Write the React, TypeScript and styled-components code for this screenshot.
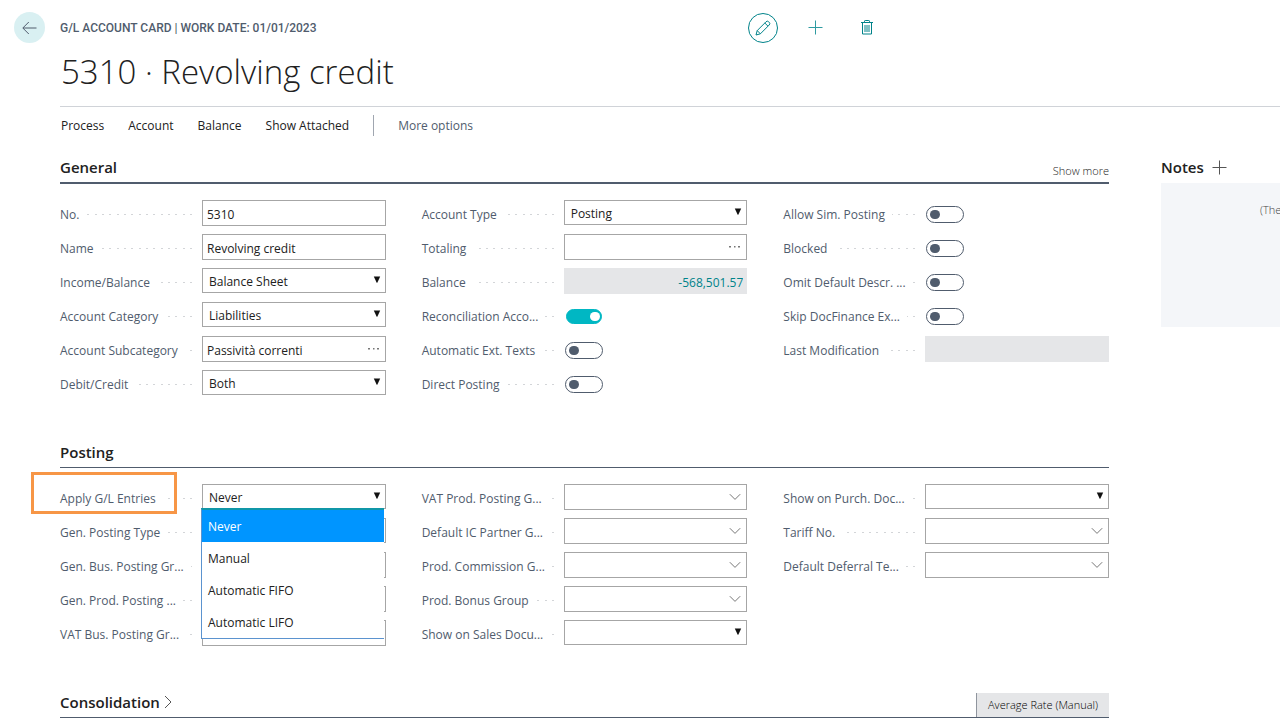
import React, { useId } from 'react';
import styled, { createGlobalStyle } from 'styled-components';

const ink = '#212121';
const slate = '#505c6d';
const teal = '#00838a';
const line = '#a6a6a6';

const GlobalStyle = createGlobalStyle`
  *, *::before, *::after { box-sizing: border-box; }
  body {
    margin: 0;
    background: #fff;
    color: ${ink};
    font-family: 'Open Sans', 'Noto Sans', sans-serif;
    font-size: 12px;
    line-height: 20px;
    overflow-x: hidden;
  }
  button, input, select { font: inherit; color: inherit; }
  button { border: 0; padding: 0; background: none; cursor: pointer; }
`;

const Page = styled.div`
  padding: 0 0 0 60px;
`;

const TopBar = styled.header`
  display: grid;
  grid-template-columns: 31px 1fr 532px;
  align-items: center;
  column-gap: 15px;
  margin-left: -46px;
  padding-top: 12px;
`;

const BackButton = styled.button`
  display: grid;
  place-items: center;
  width: 31px;
  height: 31px;
  border-radius: 50%;
  background: #d9f0f2;
`;

const Crumb = styled.div`
  font-family: Roboto, sans-serif;
  font-size: 12px;
  font-weight: 500;
  color: ${slate};
  white-space: nowrap;
`;

const Actions = styled.div`
  display: flex;
  align-items: center;
  gap: 22px;
`;

const IconButton = styled.button<{ $ring?: boolean }>`
  display: grid;
  place-items: center;
  width: 30px;
  height: 30px;
  border-radius: 50%;
  border: ${(p) => (p.$ring ? `1px solid ${teal}` : '0')};
`;

const Title = styled.h1`
  margin: 0;
  padding: 4px 0 0 1px;
  font-size: 33px;
  line-height: 50px;
  font-weight: 300;
  white-space: nowrap;
`;

const Menu = styled.nav`
  display: flex;
  align-items: center;
  gap: 24px;
  margin-top: 9px;
  padding: 8px 0 0 1px;
  border-top: 1px solid #d0d3d8;
`;

const MenuItem = styled.button<{ $muted?: boolean }>`
  color: ${(p) => (p.$muted ? slate : ink)};
  white-space: nowrap;
`;

const Divider = styled.span`
  width: 1px;
  height: 21px;
  background: #a0a6b0;
`;

const Body = styled.div`
  display: grid;
  grid-template-columns: minmax(0, 1fr) 119px;
  column-gap: 52px;
  padding-top: 21px;
`;

const Group = styled.section`
  & + & { margin-top: 44px; }
`;

const GroupHead = styled.div<{ $strong?: boolean }>`
  display: flex;
  align-items: flex-end;
  justify-content: space-between;
  height: ${(p) => (p.$strong ? 27 : 28)}px;
  border-bottom: ${(p) => (p.$strong ? 2 : 1)}px solid ${slate};
`;

const GroupTitle = styled.h2`
  display: flex;
  align-items: center;
  gap: 4px;
  margin: 0;
  padding-bottom: 3px;
  font-size: 15px;
  line-height: 24px;
  font-weight: 600;
`;

const ShowMore = styled.button`
  padding-bottom: 1px;
  font-size: 11px;
  font-weight: 300;
`;

const RateTag = styled.button`
  height: 24px;
  padding: 0 11px;
  border-left: 1px solid #8f959e;
  background: #e5e6e8;
  font-size: 11px;
  font-weight: 300;
  color: #000;
`;

const Columns = styled.div`
  display: grid;
  grid-template-columns: repeat(3, minmax(0, 1fr));
  column-gap: 36px;
  padding-top: 16px;
`;

const Column = styled.div`
  display: flex;
  flex-direction: column;
  gap: 8px;
`;

const Row = styled.div`
  position: relative;
  display: grid;
  grid-template-columns: 132px minmax(0, 1fr);
  column-gap: 10px;
  height: 26px;
`;

const LabelCell = styled.div`
  display: flex;
  align-items: center;
  gap: 7px;
  padding-top: 3px;
  color: ${slate};
  white-space: nowrap;
`;

const Leader = styled.span`
  flex: 1;
  height: 1px;
  background: repeating-linear-gradient(to left,
    #d3d5d8 0 2px, transparent 2px 7px,
    #d3d5d8 7px 9px, transparent 9px 15px,
    #d3d5d8 15px 17px, transparent 17px 22px);
`;

const Field = styled.div<{ $h?: number }>`
  position: relative;
  display: flex;
  height: ${(p) => p.$h ?? 26}px;
`;

const TextBox = styled.input<{ $filled?: boolean }>`
  width: 100%;
  min-width: 0;
  padding: 4px ${(p) => (p.$filled ? 3 : 4)}px 0;
  border: 1px solid ${(p) => (p.$filled ? '#e5e6e8' : line)};
  border-radius: 0;
  background: ${(p) => (p.$filled ? '#e5e6e8' : '#fff')};
  color: ${(p) => (p.$filled ? teal : ink)};
  text-align: ${(p) => (p.$filled ? 'right' : 'left')};
  outline: none;
`;

const Select = styled.select`
  appearance: none;
  width: 100%;
  min-width: 0;
  padding: 2px 6px 0;
  border: 1px solid ${line};
  border-radius: 0;
  background: #fff;
  outline: none;
`;

const Adornment = styled.span`
  position: absolute;
  top: 0;
  right: 5px;
  height: 100%;
  display: flex;
  align-items: center;
  padding-bottom: 2px;
  pointer-events: none;
`;

const LookupButton = styled.button`
  position: absolute;
  top: 0;
  right: 6px;
  height: 100%;
  display: flex;
  align-items: center;
`;

const Toggle = styled.input`
  appearance: none;
  width: 38px;
  height: 17px;
  margin: 6px 0 0 1px;
  padding: 3px;
  border: 1px solid ${slate};
  border-radius: 9px;
  background: #fff;
  &::before {
    content: '';
    display: block;
    width: 10px;
    height: 9px;
    border-radius: 5px;
    background: ${slate};
  }
  &:checked {
    width: 36px;
    height: 15px;
    margin: 7px 0 0 2px;
    padding: 2px 1px;
    border-color: #00b7c3;
    background: #00b7c3;
  }
  &:checked::before {
    margin-left: auto;
    background: #fff;
  }
`;

const OptionList = styled.ul`
  position: absolute;
  z-index: 2;
  top: 24px;
  left: 141px;
  right: 2px;
  margin: 0;
  padding: 0;
  list-style: none;
  background: #fff;
  border-style: solid;
  border-width: 2px 0 1px 1px;
  border-color: #1097a8 #5b93cf #5b93cf;
`;

const Option = styled.li<{ $active?: boolean }>`
  height: 32px;
  padding: 2px 6px 0;
  line-height: 30px;
  background: ${(p) => (p.$active ? '#0095ff' : 'transparent')};
  color: ${(p) => (p.$active ? '#fff' : ink)};
`;

const Highlight = styled.span`
  position: absolute;
  top: -12px;
  left: -29px;
  width: 146px;
  height: 42px;
  border: 3px solid #f79646;
  pointer-events: none;
`;

const NotesHead = styled.div`
  display: flex;
  align-items: center;
  gap: 8px;
  height: 26px;
  padding-bottom: 6px;
`;

const NotesTitle = styled.h2`
  margin: 0;
  font-size: 15px;
  line-height: 20px;
  font-weight: 600;
`;

const NotesBox = styled.div`
  height: 144px;
  padding: 17px 0 0 99px;
  background: #f4f6f9;
  color: #444;
  font-size: 11px;
  font-weight: 300;
`;

const Triangle = () => (
  <svg width="8" height="7" viewBox="0 0 8 7"><path d="M.8 .5h6.400L4.300 6.800h-.6z" fill="#111" /></svg>
);
const Chevron = () => (
  <svg width="12" height="8" viewBox="0 0 12 8" fill="none" stroke="#777"><path d="M.8 1.200 6 6.400l5.200-5.200" /></svg>
);
const Dots = () => (
  <svg width="12" height="4" viewBox="0 0 12 4" fill="#777">
    <rect x="0" y="1" width="2" height="1.500" /><rect x="5" y="1" width="1.500" height="1.500" /><rect x="9" y="1" width="2" height="1.500" />
  </svg>
);
const Plus = ({ color }: { color: string }) => (
  <svg width="15" height="15" viewBox="0 0 15 15" fill="none" stroke={color}><path d="M7.500 .5v14M.5 7.500h14" /></svg>
);
const BackArrow = () => (
  <svg width="15" height="14" viewBox="0 0 15 14" fill="none" stroke="#505c6d"><path d="M14.500 7H1M6.800 1 .8 7l6 6" /></svg>
);
const Pencil = () => (
  <svg width="16" height="16" viewBox="0 0 16 16" fill="none" stroke={teal} strokeLinejoin="round">
    <path d="M1 15l1.200-4.400L11 1.800a1.900 1.900 0 0 1 2.700 0l.5.5a1.900 1.900 0 0 1 0 2.700L5.400 13.800z" />
    <path d="M9.800 3l3.200 3.200M2.200 10.600l3.200 3.200" />
  </svg>
);
const Trash = () => (
  <svg width="12" height="15" viewBox="0 0 12 15" fill="none" stroke={teal}>
    <path d="M0 2.500h12M3.500 2.500V1.200q0-.7.7-.7h3.600q.7 0 .7.700v1.300M1.500 2.500v11.500h9V2.500M4 5v7M6 5v7M8 5v7" />
  </svg>
);

type Kind = 'text' | 'select' | 'dots' | 'lookup' | 'filled' | 'toggle';
interface FieldData { label: string; kind: Kind; value?: string; on?: boolean; open?: boolean }

const general: FieldData[][] = [
  [
    { label: 'No.', kind: 'text', value: '5310' },
    { label: 'Name', kind: 'text', value: 'Revolving credit' },
    { label: 'Income/Balance', kind: 'select', value: 'Balance Sheet' },
    { label: 'Account Category', kind: 'select', value: 'Liabilities' },
    { label: 'Account Subcategory', kind: 'dots', value: 'Passività correnti' },
    { label: 'Debit/Credit', kind: 'select', value: 'Both' },
  ],
  [
    { label: 'Account Type', kind: 'select', value: 'Posting' },
    { label: 'Totaling', kind: 'dots' },
    { label: 'Balance', kind: 'filled', value: '-568,501.57' },
    { label: 'Reconciliation Acco...', kind: 'toggle', on: true },
    { label: 'Automatic Ext. Texts', kind: 'toggle' },
    { label: 'Direct Posting', kind: 'toggle' },
  ],
  [
    { label: 'Allow Sim. Posting', kind: 'toggle' },
    { label: 'Blocked', kind: 'toggle' },
    { label: 'Omit Default Descr. ...', kind: 'toggle' },
    { label: 'Skip DocFinance Ex...', kind: 'toggle' },
    { label: 'Last Modification', kind: 'filled' },
  ],
];

const posting: FieldData[][] = [
  [
    { label: 'Apply G/L Entries', kind: 'select', value: 'Never', open: true },
    { label: 'Gen. Posting Type', kind: 'select' },
    { label: 'Gen. Bus. Posting Gr...', kind: 'lookup' },
    { label: 'Gen. Prod. Posting ...', kind: 'lookup' },
    { label: 'VAT Bus. Posting Gr...', kind: 'lookup' },
  ],
  [
    { label: 'VAT Prod. Posting G...', kind: 'lookup' },
    { label: 'Default IC Partner G...', kind: 'lookup' },
    { label: 'Prod. Commission G...', kind: 'lookup' },
    { label: 'Prod. Bonus Group', kind: 'lookup' },
    { label: 'Show on Sales Docu...', kind: 'select' },
  ],
  [
    { label: 'Show on Purch. Doc...', kind: 'select' },
    { label: 'Tariff No.', kind: 'lookup' },
    { label: 'Default Deferral Te...', kind: 'lookup' },
  ],
];

const applyOptions = ['Never', 'Manual', 'Automatic FIFO', 'Automatic LIFO'];

function Control({ id, field }: { id: string; field: FieldData }) {
  const { kind, value = '', on } = field;
  if (kind === 'toggle') return <Field><Toggle id={id} type="checkbox" defaultChecked={on} /></Field>;
  if (kind === 'select') {
    return (
      <Field $h={25}>
        <Select id={id} defaultValue={value}><option>{value}</option></Select>
        <Adornment><Triangle /></Adornment>
      </Field>
    );
  }
  return (
    <Field>
      <TextBox id={id} defaultValue={value} $filled={kind === 'filled'} readOnly={kind === 'filled'} />
      {kind === 'dots' && <LookupButton type="button"><Dots /></LookupButton>}
      {kind === 'lookup' && <LookupButton type="button"><Chevron /></LookupButton>}
    </Field>
  );
}

function FieldRow({ field }: { field: FieldData }) {
  const id = useId();
  return (
    <Row>
      <LabelCell><label htmlFor={id}>{field.label}</label><Leader /></LabelCell>
      <Control id={id} field={field} />
      {field.open && (
        <>
          <Highlight />
          <OptionList role="listbox">
            {applyOptions.map((o) => (
              <Option key={o} role="option" aria-selected={o === field.value} $active={o === field.value}>{o}</Option>
            ))}
          </OptionList>
        </>
      )}
    </Row>
  );
}

const FieldColumns = ({ columns }: { columns: FieldData[][] }) => (
  <Columns>
    {columns.map((col, i) => (
      <Column key={i}>{col.map((f) => <FieldRow key={f.label} field={f} />)}</Column>
    ))}
  </Columns>
);

export default function App() {
  return (
    <>
      <GlobalStyle />
      <Page>
        <TopBar>
          <BackButton type="button"><BackArrow /></BackButton>
          <Crumb>G/L ACCOUNT CARD | WORK DATE: 01/01/2023</Crumb>
          <Actions>
            <IconButton type="button" $ring><Pencil /></IconButton>
            <IconButton type="button"><Plus color="#2f9ba1" /></IconButton>
            <IconButton type="button"><Trash /></IconButton>
          </Actions>
        </TopBar>
        <Title>5310 · Revolving credit</Title>
        <Menu>
          <MenuItem type="button">Process</MenuItem>
          <MenuItem type="button">Account</MenuItem>
          <MenuItem type="button">Balance</MenuItem>
          <MenuItem type="button">Show Attached</MenuItem>
          <Divider />
          <MenuItem type="button" $muted>More options</MenuItem>
        </Menu>
        <Body>
          <main>
            <Group>
              <GroupHead $strong>
                <GroupTitle>General</GroupTitle>
                <ShowMore type="button">Show more</ShowMore>
              </GroupHead>
              <FieldColumns columns={general} />
            </Group>
            <Group>
              <GroupHead>
                <GroupTitle>Posting</GroupTitle>
              </GroupHead>
              <FieldColumns columns={posting} />
            </Group>
            <Group>
              <GroupHead>
                <GroupTitle>
                  Consolidation
                  <svg width="8" height="14" viewBox="0 0 8 14" fill="none" stroke="#555"><path d="M1 1l6 6-6 6" /></svg>
                </GroupTitle>
                <RateTag type="button">Average Rate (Manual)</RateTag>
              </GroupHead>
            </Group>
          </main>
          <aside>
            <NotesHead>
              <NotesTitle>Notes</NotesTitle>
              <Plus color="#555" />
            </NotesHead>
            <NotesBox>(The</NotesBox>
          </aside>
        </Body>
      </Page>
    </>
  );
}
